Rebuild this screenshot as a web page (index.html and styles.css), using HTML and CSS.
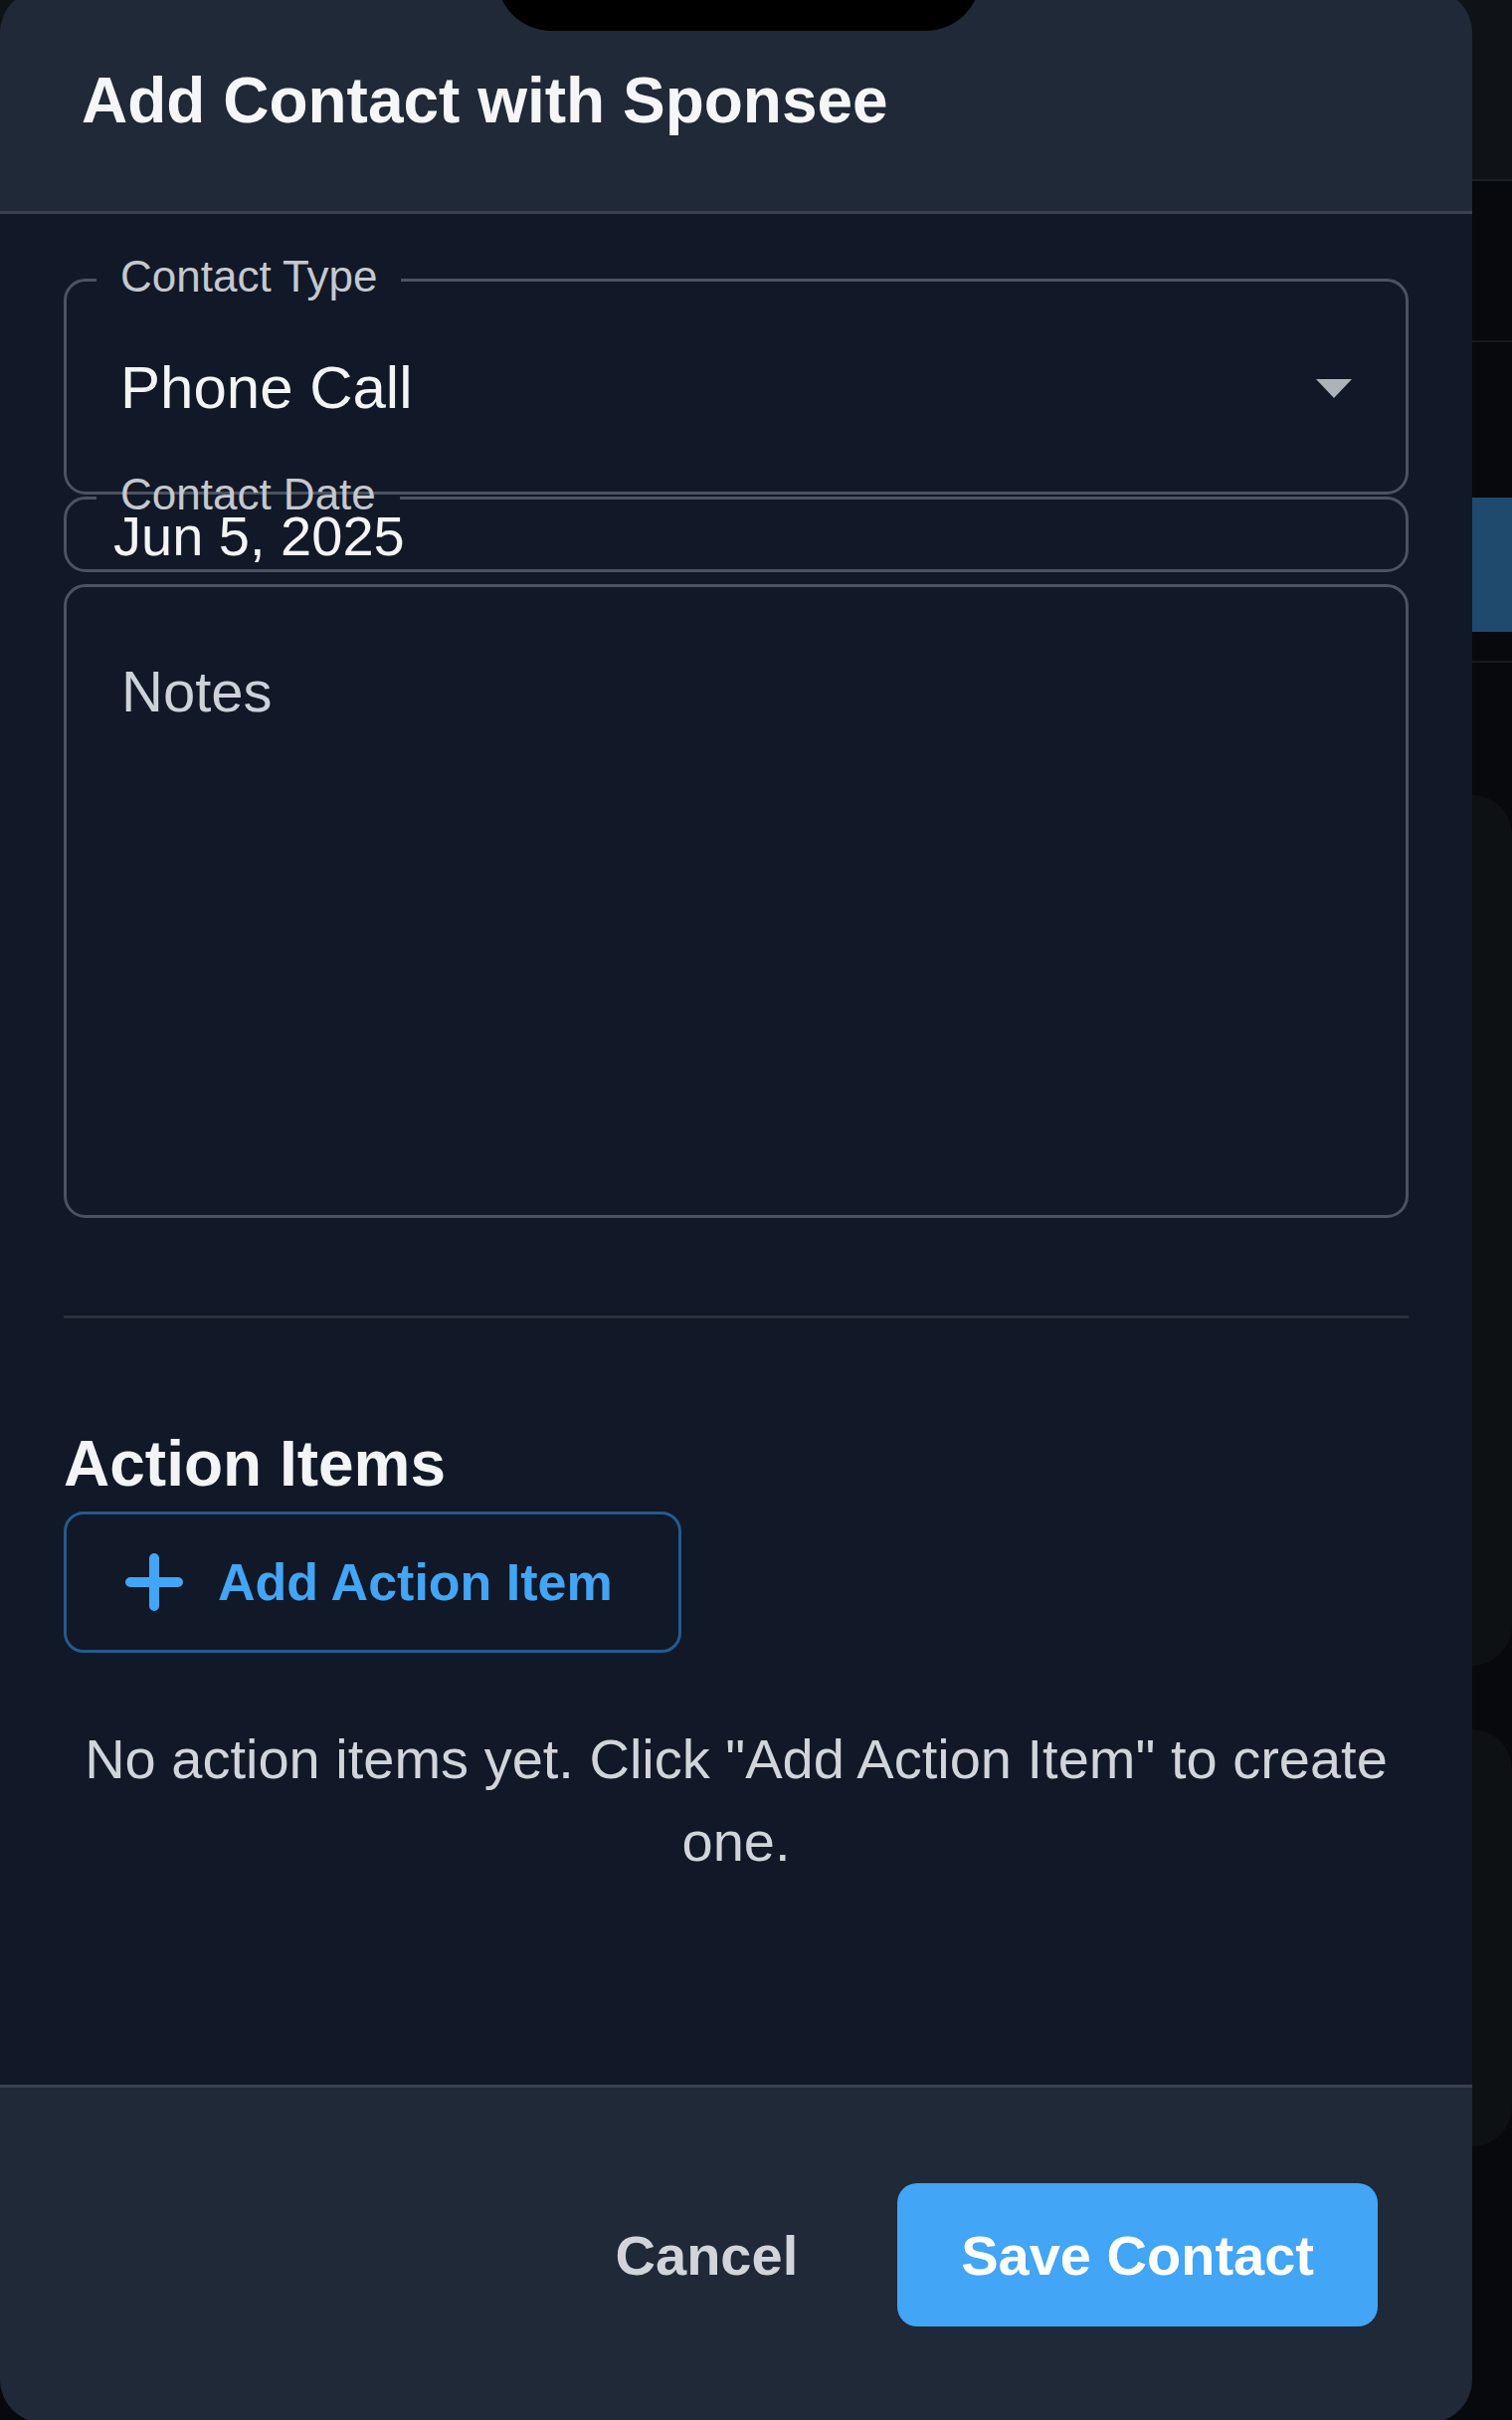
FILE: index.html
```html
<!DOCTYPE html>
<html lang="en">
<head>
<meta charset="utf-8">
<title>Add Contact with Sponsee</title>
<link rel="stylesheet" href="styles.css">
</head>
<body>
  <div class="backdrop">
    <div class="bg-top"></div>
    <div class="bg-row"></div>
    <div class="bg-gap"></div>
    <div class="bg-blue"></div>
    <div class="bg-row2"></div>
    <div class="bg-card bg-card-1"></div>
    <div class="bg-card bg-card-2"></div>
  </div>

  <div class="island"></div>

  <div class="modal" role="dialog" aria-labelledby="dlg-title">
    <header class="modal-header">
      <h2 id="dlg-title" class="modal-title">Add Contact with Sponsee</h2>
    </header>

    <main class="modal-body">
      <fieldset class="field">
        <legend class="field-label">Contact Type</legend>
        <div class="select-row">
          <span class="select-value">Phone Call</span>
          <svg class="select-arrow" width="36" height="19" viewBox="0 0 36 19" aria-hidden="true"><polygon points="0,0 36,0 18,19"/></svg>
        </div>
      </fieldset>

      <fieldset class="field field-date">
        <legend class="field-label">Contact Date</legend>
        <div class="date-value">Jun 5, 2025</div>
      </fieldset>

      <div class="notes">
        <span class="notes-placeholder">Notes</span>
      </div>

      <div class="divider"></div>

      <h3 class="section-title">Action Items</h3>
      <button class="btn-outline" type="button">
        <svg class="plus" width="58" height="58" viewBox="0 0 58 58" aria-hidden="true"><path d="M29 5v48M5 29h48"/></svg>
        <span>Add Action Item</span>
      </button>

      <p class="empty">No action items yet. Click "Add Action Item" to create one.</p>
    </main>

    <footer class="modal-footer">
      <button class="btn-text" type="button">Cancel</button>
      <button class="btn-primary" type="button">Save Contact</button>
    </footer>
  </div>
</body>
</html>
```

FILE: styles.css
```css
html, body {
  margin: 0;
  padding: 0;
}

body {
  width: 1520px;
  height: 2432px;
  overflow: hidden;
  position: relative;
  background: #08090c;
  font-family: "Liberation Sans", Arial, sans-serif;
}

/* underlying page (only a sliver is visible) */
.backdrop {
  display: flex;
  flex-direction: column;
}

.bg-top {
  height: 180px;
  background: #0f1216;
  border-bottom: 2px solid #1b1e23;
}

.bg-row {
  height: 160px;
  border-bottom: 2px solid #17191d;
}

.bg-gap {
  height: 156px;
}

.bg-blue {
  height: 135px;
  background: #1f4a6d;
}

.bg-row2 {
  height: 29px;
  border-bottom: 2px solid #17191d;
}

.bg-card {
  background: #0e1114;
  border-radius: 40px;
  margin-left: 1100px;
}

.bg-card-1 {
  margin-top: 133px;
  height: 875px;
}

.bg-card-2 {
  margin-top: 64px;
  height: 419px;
}

/* phone camera island */
.island {
  position: absolute;
  z-index: 5;
  left: 499px;
  top: -80px;
  width: 487px;
  height: 111px;
  border-radius: 56px;
  background: #000;
}

/* dialog */
.modal {
  position: absolute;
  left: 0;
  top: -11px;
  width: 1480px;
  height: 2446px;
  border-radius: 44px;
  background: #111827;
  display: flex;
  flex-direction: column;
  overflow: hidden;
}

.modal-header {
  background: #1f2937;
  padding: 74px 82px 73px;
  border-bottom: 3px solid #394150;
}

.modal-title {
  margin: 0;
  font-size: 64px;
  line-height: 76px;
  font-weight: 700;
  color: #f5f6f8;
}

.modal-body {
  flex: 1;
  padding: 41px 64px 0;
  display: flex;
  flex-direction: column;
  align-items: flex-start;
}

.field {
  align-self: stretch;
  margin: 0;
  min-width: 0;
  padding: 0 0 0 30px;
  border: 3px solid #4b5260;
  border-radius: 22px;
}

.field-label {
  padding: 0 24px 7px;
  font-size: 44px;
  line-height: 44px;
  color: #c4c8cf;
}

.select-row {
  display: flex;
  align-items: center;
  justify-content: space-between;
  padding: 53px 54px 74px 24px;
}

.select-value {
  font-size: 60px;
  line-height: 60px;
  color: #f3f4f6;
}

.select-arrow {
  fill: #aeb3bb;
}

.field-date {
  margin-top: -22px;
}

.date-value {
  margin-top: -15px;
  padding: 0 0 6px 17px;
  font-size: 56px;
  line-height: 55px;
  color: #f3f4f6;
}

.notes {
  align-self: stretch;
  box-sizing: border-box;
  margin-top: 12px;
  height: 637px;
  padding: 76px 56px 0 55px;
  border: 3px solid #4b5260;
  border-radius: 22px;
}

.notes-placeholder {
  display: block;
  font-size: 58px;
  line-height: 58px;
  color: #cdd1d8;
}

.divider {
  align-self: stretch;
  margin-top: 98px;
  height: 3px;
  background: #2b313c;
}

.section-title {
  margin: 115px 0 0;
  font-size: 64px;
  line-height: 62px;
  font-weight: 700;
  color: #f3f4f6;
}

.btn-outline {
  margin-top: 17px;
  box-sizing: border-box;
  height: 142px;
  display: inline-flex;
  align-items: center;
  gap: 35px;
  padding: 0 66px 0 59px;
  background: transparent;
  border: 3px solid #245b8d;
  border-radius: 20px;
  font-family: inherit;
  font-size: 52px;
  font-weight: 700;
  color: #42a5f5;
}

.plus {
  stroke: #42a5f5;
  stroke-width: 10;
  stroke-linecap: round;
  fill: none;
}

.empty {
  align-self: stretch;
  margin: 65px 0 0;
  font-size: 56px;
  line-height: 83px;
  text-align: center;
  color: #d1d5db;
}

.modal-footer {
  background: #1f2937;
  border-top: 3px solid #394150;
  padding: 96px 95px 97px;
  display: flex;
  justify-content: flex-end;
  align-items: center;
}

.btn-text {
  height: 144px;
  padding: 0 50px;
  margin-right: 50px;
  background: transparent;
  border: 0;
  font-family: inherit;
  font-size: 56px;
  font-weight: 700;
  color: #d1d5db;
}

.btn-primary {
  height: 144px;
  padding: 0 64px;
  background: #42a5f5;
  border: 0;
  border-radius: 20px;
  font-family: inherit;
  font-size: 56px;
  font-weight: 700;
  color: #ffffff;
}
```
